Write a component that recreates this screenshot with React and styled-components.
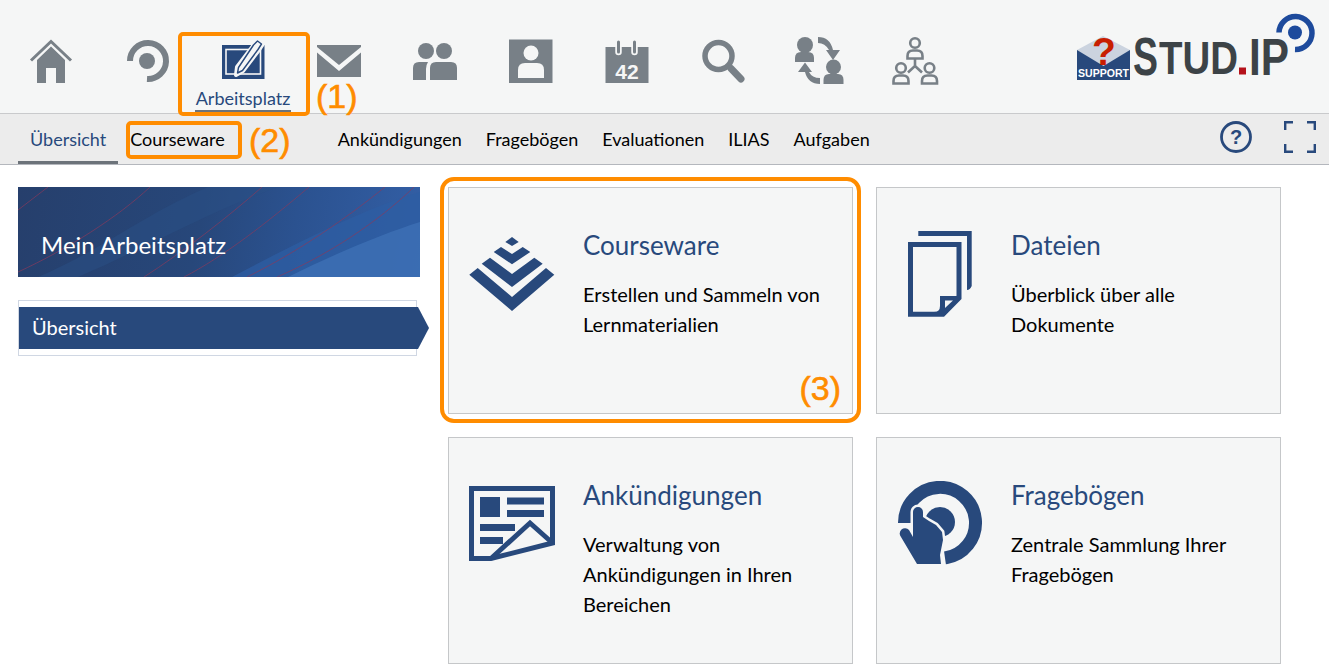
import React from 'react';
import styled, { createGlobalStyle } from 'styled-components';

const BLUE = '#28497c';
const GREY = '#788087';
const ORANGE = '#ff8c00';

function HomeIcon() {
  return (
    <svg width="54" height="54" viewBox="24 35 54 54">
      <path d="M51 46.5 L65 60 V83 H56 V68 H46 V83 H37 V60 Z" fill={GREY} />
      <path d="M31 60.5 L51 41.5 L71 60.5" fill="none" stroke={GREY} strokeWidth="3" />
    </svg>
  );
}

function RingIcon() {
  return (
    <svg width="54" height="54" viewBox="119 35 54 54">
      <path d="M129 61 A18 18 0 1 1 146 79" fill="none" stroke={GREY} strokeWidth="6" />
      <circle cx="146" cy="61" r="8" fill={GREY} />
    </svg>
  );
}

function WorkplaceIcon() {
  return (
    <svg width="54" height="54" viewBox="216 35 54 54">
      <rect x="222" y="45" width="42.5" height="34" fill={BLUE} />
      <rect x="226" y="49.5" width="34.5" height="24.5" fill="none" stroke="#f5f6f6" strokeWidth="1.6" />
      <path d="M253 46 L258 40 L263 44 L259 50 L243 71 L236 75 L237 67 Z" fill={BLUE} stroke="#f5f6f6" strokeWidth="4" strokeLinejoin="round" />
      <path d="M253.5 45 L257.5 41 L261.5 44 L258 49.5 L242.5 70.5 L237.5 73 L238.5 67.5 Z" fill="#f5f6f6" stroke={BLUE} strokeWidth="1.4" strokeLinejoin="round" />
    </svg>
  );
}

function MailIcon() {
  return (
    <svg width="54" height="54" viewBox="312 35 54 54">
      <path d="M317 45 H361 V47 L339 65 L317 47 Z" fill={GREY} />
      <path d="M317 52.5 L339 71 L361 52.5 V77 H317 Z" fill={GREY} />
    </svg>
  );
}

function PeopleIcon() {
  return (
    <svg width="54" height="54" viewBox="408 35 54 54">
      <circle cx="426" cy="51" r="8" fill={GREY} />
      <circle cx="444" cy="51" r="8" fill={GREY} />
      <path d="M413 80 V68 Q413 62 419 62 H428 Q426 65 426 69 V80 Z" fill={GREY} />
      <path d="M430 80 V68 Q430 62 436 62 H451 Q457 62 457 68 V80 Z" fill={GREY} />
    </svg>
  );
}

function ProfileIcon() {
  return (
    <svg width="54" height="54" viewBox="504 35 54 54">
      <rect x="509" y="39.5" width="43.5" height="43.5" fill={GREY} />
      <circle cx="531" cy="53" r="7.5" fill="#f5f6f6" />
      <path d="M518 78 V70 Q518 63 525 63 H537 Q544 63 544 70 V78 Z" fill="#f5f6f6" />
    </svg>
  );
}

function CalendarIcon() {
  return (
    <svg width="54" height="54" viewBox="600 35 54 54">
      <rect x="605.5" y="47" width="43" height="36" fill={GREY} />
      <path d="M618.5 42 V52" stroke="#f5f6f6" strokeWidth="6.5" strokeLinecap="round" />
      <path d="M634.5 42 V52" stroke="#f5f6f6" strokeWidth="6.5" strokeLinecap="round" />
      <path d="M618.5 42 V52" stroke={GREY} strokeWidth="3" strokeLinecap="round" />
      <path d="M634.5 42 V52" stroke={GREY} strokeWidth="3" strokeLinecap="round" />
      <text x="627" y="78.5" textAnchor="middle" fill="#f5f6f6" fontFamily="'Liberation Sans', sans-serif" fontWeight="700" fontSize="21">42</text>
    </svg>
  );
}

function SearchIcon() {
  return (
    <svg width="54" height="54" viewBox="696 35 54 54">
      <circle cx="718.5" cy="56" r="13.5" fill="none" stroke={GREY} strokeWidth="5.5" />
      <path d="M731 68.5 L741 79" stroke={GREY} strokeWidth="7" strokeLinecap="round" />
    </svg>
  );
}

function ExchangeIcon() {
  return (
    <svg width="54" height="54" viewBox="792 35 54 54">
      <circle cx="805" cy="45" r="8" fill={GREY} />
      <path d="M795 62 V58 Q795 52 801 52 H808 Q814 52 814 58 V62 Z" fill={GREY} />
      <circle cx="833.5" cy="67" r="7.5" fill={GREY} />
      <path d="M823.5 84 V80 Q823.5 74 829 74 H838 Q843.5 74 843.5 80 V84 Z" fill={GREY} />
      <path d="M818 37 Q830 37 833 50 H840 L833 60 L826 50 H829 Q825 43 818 43 Z" fill={GREY} />
      <path d="M820 84 Q808 84 805 72 H798 L805 62.5 L812 72 H809 Q812 78 820 78 Z" fill={GREY} />
    </svg>
  );
}

function StructureIcon() {
  const outline = { fill: 'none', stroke: GREY, strokeWidth: 2.6 };
  return (
    <svg width="54" height="54" viewBox="888 35 54 54">
      <circle cx="915" cy="43" r="4.8" {...outline} />
      <path d="M907.5 58.5 V56 Q907.5 50.5 913 50.5 H917 Q922.5 50.5 922.5 56 V58.5 Z" {...outline} />
      <circle cx="901" cy="68" r="4.8" {...outline} />
      <path d="M893.5 83.5 V81 Q893.5 75.5 899 75.5 H903 Q908.5 75.5 908.5 81 V83.5 Z" {...outline} />
      <circle cx="929.5" cy="68" r="4.8" {...outline} />
      <path d="M922 83.5 V81 Q922 75.5 927.5 75.5 H931.5 Q937 75.5 937 81 V83.5 Z" {...outline} />
      <path d="M915 59 V66 L908 72.5 M915 66 L922 72.5" {...outline} />
    </svg>
  );
}

function Logo() {
  const ink = '#3c4347';
  const font = "'Liberation Sans', sans-serif";
  return (
    <svg width="240" height="70" viewBox="1077 12 240 70">
      <path d="M1077 50 L1103 36 L1130 50 V68 H1077 Z" fill="#cbd3df" />
      <path d="M1077 50 L1103.5 66 L1130 50 V80 H1077 Z" fill="#28497c" />
      <text x="1104" y="65" textAnchor="middle" fill="#c81e00" fontFamily={font} fontWeight="700" fontSize="39">?</text>
      <text x="1078" y="77" fill="#ffffff" fontFamily={font} fontWeight="700" fontSize="11.5" textLength="51" lengthAdjust="spacingAndGlyphs">SUPPORT</text>
      <text x="1133" y="75" fill={ink} fontFamily={font} fontWeight="700" fontSize="53" textLength="25" lengthAdjust="spacingAndGlyphs">S</text>
      <text x="1159" y="74" fill={ink} fontFamily={font} fontWeight="700" fontSize="47" textLength="79" lengthAdjust="spacingAndGlyphs">TUD</text>
      <rect x="1239" y="67.5" width="7" height="7" fill="#b5121b" />
      <text x="1249" y="75" fill={ink} fontFamily={font} fontWeight="700" fontSize="52" textLength="40" lengthAdjust="spacingAndGlyphs">IP</text>
      <path d="M1279 32.5 A16.5 16.5 0 1 1 1295 49.5" fill="none" stroke="#1d4a9c" strokeWidth="5.5" />
      <circle cx="1295" cy="32.5" r="7" fill="#1d4a9c" />
    </svg>
  );
}

function HelpIcon() {
  return (
    <svg width="34" height="34" viewBox="0 0 34 34">
      <circle cx="17" cy="17" r="14.5" fill="none" stroke={BLUE} strokeWidth="2.8" />
      <text x="17" y="24" textAnchor="middle" fill={BLUE} fontFamily="'Liberation Sans', sans-serif" fontWeight="700" fontSize="20">?</text>
    </svg>
  );
}

function FullscreenIcon() {
  return (
    <svg width="32" height="32" viewBox="0 0 32 32">
      <path d="M1.2 9 V1.2 H9 M23 1.2 H30.8 V9 M30.8 23 V30.8 H23 M9 30.8 H1.2 V23" fill="none" stroke={BLUE} strokeWidth="2.4" />
    </svg>
  );
}

function CoursewareIcon() {
  return (
    <svg width="86" height="86" viewBox="0 -5 86 86">
      <g fill={BLUE}>
        <path d="M43 1 L49.7 6 L43 10 L36.3 6 Z" />
        <path d="M24.7 16 L32 11 L43 18 L53.7 11 L61.3 16 L43 28.3 Z" />
        <path d="M12.7 27.7 L21 21.7 L43 38 L65.3 21.7 L73.7 27.7 L43 51 Z" />
        <path d="M0.3 38.7 L8.7 32 L43 61 L77 32 L85.3 38.7 L43 75 Z" />
      </g>
    </svg>
  );
}

function FilesIcon() {
  return (
    <svg width="86" height="86" viewBox="17 31 86 86">
      <path d="M38.3 31 H91.7 V86 Q90 90 87 90 V36 H38.3 Z" fill={BLUE} />
      <path d="M30.5 44.5 H79 V98 L63 114.2 H30.5 Z" fill="none" stroke={BLUE} strokeWidth="5" />
      <path d="M81 92 Q81 96 76 96 H60 V106 Q60 112 54 112 H66 L81 97 Z" fill={BLUE} />
      <path d="M65 100.5 H73 L65 108 Z" fill="#f5f6f6" />
    </svg>
  );
}

function NewsIcon() {
  return (
    <svg width="86" height="86" viewBox="19 10 86 86">
      <g fill={BLUE}>
        <rect x="30" y="26" width="20" height="20" />
        <rect x="57" y="26.5" width="37" height="7" />
        <rect x="57" y="39" width="37" height="7" />
        <rect x="30" y="53" width="35" height="7" />
        <rect x="30" y="66" width="23" height="7" />
      </g>
      <path d="M21.5 17.5 H102.5 V72 L41 87.5 H21.5 Z" fill="none" stroke={BLUE} strokeWidth="5" />
      <path d="M41 87.5 L80 52 L102.5 72" fill="none" stroke={BLUE} strokeWidth="5" />
    </svg>
  );
}

function SurveyIcon() {
  return (
    <svg width="86" height="86" viewBox="17 16 86 86">
      <path d="M24.5 58 A35.5 35.5 0 1 1 65 93" fill="none" stroke={BLUE} strokeWidth="13" />
      <circle cx="60" cy="57" r="15" fill={BLUE} />
      <path
        d="M33 47 A5 5 0 0 1 43 47 L43 52 L49 56 L56 60 L62 67 L63 75 L60 90 L61 99 H37 L21 72 A4.4 4.4 0 0 1 29 65 L33 72 Z"
        fill={BLUE}
        stroke="#f5f6f6"
        strokeWidth="5"
        paintOrder="stroke"
        strokeLinejoin="round"
      />
      <rect x="30" y="99.5" width="40" height="4" fill="#f5f6f6" />
    </svg>
  );
}

const mainNav = [
  { key: 'start', Icon: HomeIcon },
  { key: 'ring', Icon: RingIcon },
  { key: 'workplace', Icon: WorkplaceIcon, label: 'Arbeitsplatz' },
  { key: 'mail', Icon: MailIcon },
  { key: 'people', Icon: PeopleIcon },
  { key: 'profile', Icon: ProfileIcon },
  { key: 'calendar', Icon: CalendarIcon },
  { key: 'search', Icon: SearchIcon },
  { key: 'exchange', Icon: ExchangeIcon },
  { key: 'structure', Icon: StructureIcon },
];

const tabs = [
  { name: 'Übersicht', active: true },
  { name: 'Courseware', spaced: true },
  { name: 'Ankündigungen' },
  { name: 'Fragebögen' },
  { name: 'Evaluationen' },
  { name: 'ILIAS' },
  { name: 'Aufgaben' },
];

const cards = [
  { title: 'Courseware', Icon: CoursewareIcon, text: 'Erstellen und Sammeln von Lernmaterialien', marked: true },
  { title: 'Dateien', Icon: FilesIcon, text: 'Überblick über alle Dokumente' },
  { title: 'Ankündigungen', Icon: NewsIcon, text: 'Verwaltung von Ankündigungen in Ihren Bereichen' },
  { title: 'Fragebögen', Icon: SurveyIcon, text: 'Zentrale Sammlung Ihrer Fragebögen' },
];

export default function App() {
  return (
    <Page>
      <GlobalStyle />
      <TopBar>
        <MainNav>
          {mainNav.map(({ key, Icon, label }) => (
            <MainItem key={key} $active={!!label}>
              <Icon />
              {label && <MainLabel>{label}</MainLabel>}
            </MainItem>
          ))}
        </MainNav>
        <LogoLink>
          <Logo />
        </LogoLink>
      </TopBar>

      <TabBar>
        {tabs.map((tab) => (
          <Tab key={tab.name} $active={tab.active} $spaced={tab.spaced}>
            {tab.name}
          </Tab>
        ))}
        <TabTools>
          <HelpIcon />
          <FullscreenIcon />
        </TabTools>
      </TabBar>

      <Content>
        <Sidebar>
          <Hero>
            <HeroArt viewBox="0 0 402 90" preserveAspectRatio="none">
              <path d="M214 90 C280 55 350 20 402 5 V90 Z" fill="#2e5da3" opacity="0.75" />
              <path d="M270 90 C320 65 370 45 402 35 V90 Z" fill="#3d70b5" opacity="0.8" />
              <path d="M60 90 C130 60 190 25 260 0 H190 C130 25 80 65 20 90 Z" fill="#2a4f86" opacity="0.5" />
              <g fill="none" stroke="#8c3a5c" strokeWidth="0.8" opacity="0.85">
                <path d="M0 23 C10 15 20 8 30 0" />
                <path d="M0 85 C50 62 100 30 132 0" />
                <path d="M126 90 C165 65 210 30 244 0" />
                <path d="M166 90 C205 70 250 35 291 0" />
                <path d="M229 90 C280 65 330 30 367 0" />
                <path d="M259 90 C310 68 360 35 396 0" />
              </g>
            </HeroArt>
            <HeroTitle>Mein Arbeitsplatz</HeroTitle>
          </Hero>
          <SideBox>
            <SideItem>Übersicht</SideItem>
          </SideBox>
        </Sidebar>

        <CardGrid>
          {cards.map(({ title, Icon, text, marked }) => (
            <Card key={title}>
              <CardIcon>
                <Icon />
              </CardIcon>
              <CardText>
                <CardTitle>{title}</CardTitle>
                <CardBody>{text}</CardBody>
              </CardText>
              {marked && (
                <>
                  <CardFrame />
                  <CardMark>(3)</CardMark>
                </>
              )}
            </Card>
          ))}
        </CardGrid>
      </Content>

      <MarkBox $x={178} $y={32} $w={132} $h={84} />
      <MarkText $x={316} $y={76}>(1)</MarkText>
      <MarkBox $x={126} $y={121} $w={116} $h={38} />
      <MarkText $x={249} $y={120}>(2)</MarkText>
    </Page>
  );
}

const GlobalStyle = createGlobalStyle`
  html, body {
    margin: 0;
    padding: 0;
    background: #ffffff;
    overflow: hidden;
  }
  body {
    font-family: Lato, "Liberation Sans", sans-serif;
    color: #000000;
  }
  svg {
    display: block;
    flex: none;
  }
`;

const Page = styled.div`
  position: relative;
  width: 1329px;
  height: 671px;
  overflow: hidden;
`;

const TopBar = styled.header`
  display: flex;
  justify-content: space-between;
  align-items: flex-start;
  height: 113px;
  padding: 0 12px 0 3px;
  background: #f5f6f6;
  border-bottom: 1px solid #c9cacc;
`;

const MainNav = styled.nav`
  display: flex;
`;

const MainItem = styled.div`
  display: flex;
  flex-direction: column;
  align-items: center;
  box-sizing: border-box;
  width: 96px;
  height: 113px;
  padding-top: 35px;
  border-bottom: 3px solid ${(p) => (p.$active ? '#6c737a' : 'transparent')};
`;

const MainLabel = styled.span`
  margin-top: -2px;
  font-size: 18px;
  line-height: 22px;
  color: ${BLUE};
  white-space: nowrap;
`;

const LogoLink = styled.a`
  display: block;
  margin-top: 12px;
`;

const TabBar = styled.nav`
  display: flex;
  align-items: stretch;
  box-sizing: border-box;
  height: 51px;
  padding: 0 13px 0 18px;
  background: #ececec;
  border-bottom: 1px solid #b4b7bd;
`;

const Tab = styled.a`
  display: flex;
  align-items: center;
  box-sizing: border-box;
  height: 50px;
  padding: 3px 12px 0;
  margin-right: ${(p) => (p.$spaced ? '89px' : '0')};
  font-size: 18px;
  white-space: nowrap;
  color: ${(p) => (p.$active ? BLUE : '#000000')};
  border-bottom: 3px solid ${(p) => (p.$active ? '#6c737a' : 'transparent')};
`;

const TabTools = styled.div`
  display: flex;
  align-items: center;
  gap: 31px;
  margin-left: auto;
  padding-bottom: 4px;
`;

const Content = styled.main`
  display: flex;
  align-items: flex-start;
  gap: 28px;
  padding: 22px 0 0 18px;
`;

const Sidebar = styled.aside`
  display: flex;
  flex-direction: column;
  gap: 23px;
  width: 402px;
`;

const Hero = styled.div`
  position: relative;
  display: flex;
  align-items: center;
  height: 90px;
  padding: 25px 0 0 23px;
  box-sizing: border-box;
  overflow: hidden;
  background: linear-gradient(100deg, #263f6c 0%, #27477a 45%, #2b5290 68%, #335fa6 100%);
`;

const HeroArt = styled.svg`
  position: absolute;
  inset: 0;
  width: 100%;
  height: 100%;
`;

const HeroTitle = styled.h1`
  position: relative;
  margin: 0;
  font-size: 24px;
  font-weight: 400;
  color: #ffffff;
`;

const SideBox = styled.div`
  box-sizing: border-box;
  width: 399px;
  height: 56px;
  padding: 6px 0;
  background: #ffffff;
  border: 1px solid #d0d7e3;
`;

const SideItem = styled.div`
  position: relative;
  display: flex;
  align-items: center;
  box-sizing: border-box;
  width: 399px;
  height: 42px;
  padding: 0 0 2px 13px;
  font-size: 20px;
  color: #ffffff;
  background: ${BLUE};

  &::after {
    content: '';
    position: absolute;
    top: 0;
    right: -11px;
    width: 11px;
    height: 42px;
    background: ${BLUE};
    clip-path: polygon(0 0, 100% 50%, 0 100%);
  }
`;

const CardGrid = styled.section`
  display: grid;
  grid-template-columns: 405px 405px;
  grid-auto-rows: 227px;
  gap: 23px;
`;

const Card = styled.article`
  position: relative;
  display: flex;
  box-sizing: border-box;
  background: #f5f6f6;
  border: 1px solid #c5c7c9;
`;

const CardIcon = styled.div`
  flex: none;
  width: 86px;
  margin: 43px 0 0 20px;
`;

const CardText = styled.div`
  margin-left: 28px;
  padding: 39px 16px 0 0;
`;

const CardTitle = styled.h2`
  margin: 0 0 16px;
  font-size: 26px;
  line-height: 36px;
  font-weight: 400;
  color: ${BLUE};
`;

const CardBody = styled.p`
  margin: 0;
  font-size: 20px;
  line-height: 30px;
`;

const CardFrame = styled.div`
  position: absolute;
  inset: -11px -9px -10px -9px;
  border: 4px solid ${ORANGE};
  border-radius: 14px;
`;

const CardMark = styled.span`
  position: absolute;
  right: 11px;
  bottom: 5px;
  font-family: "Liberation Sans", sans-serif;
  font-size: 34px;
  line-height: 40px;
  color: ${ORANGE};
  -webkit-text-stroke: 0.6px ${ORANGE};
`;

const MarkBox = styled.div`
  position: absolute;
  box-sizing: border-box;
  left: ${(p) => p.$x}px;
  top: ${(p) => p.$y}px;
  width: ${(p) => p.$w}px;
  height: ${(p) => p.$h}px;
  border: 4px solid ${ORANGE};
  border-radius: 5px;
`;

const MarkText = styled.span`
  position: absolute;
  left: ${(p) => p.$x}px;
  top: ${(p) => p.$y}px;
  font-family: "Liberation Sans", sans-serif;
  font-size: 34px;
  line-height: 40px;
  color: ${ORANGE};
  -webkit-text-stroke: 0.6px ${ORANGE};
`;
